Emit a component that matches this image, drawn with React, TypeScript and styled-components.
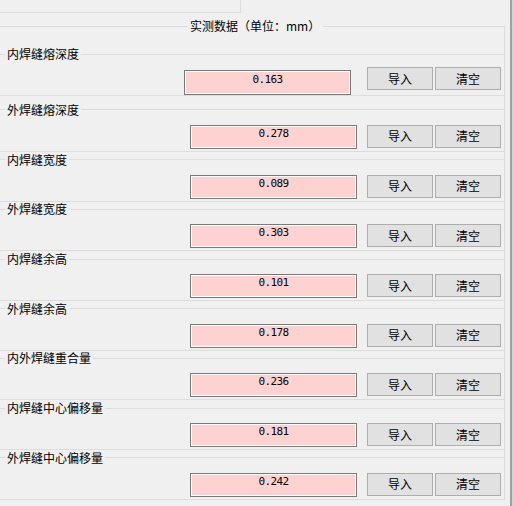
import styled, { createGlobalStyle } from 'styled-components';

// ─── Data ─────────────────────────────────────────────────────────────────────

const measurements = [
  { label: '内焊缝熔深度', value: '0.163' },
  { label: '外焊缝熔深度', value: '0.278' },
  { label: '内焊缝宽度', value: '0.089' },
  { label: '外焊缝宽度', value: '0.303' },
  { label: '内焊缝余高', value: '0.101' },
  { label: '外焊缝余高', value: '0.178' },
  { label: '内外焊缝重合量', value: '0.236' },
  { label: '内焊缝中心偏移量', value: '0.181' },
  { label: '外焊缝中心偏移量', value: '0.242' },
];

// ─── Styled components ────────────────────────────────────────────────────────

const GlobalStyle = createGlobalStyle`
  html, body {
    margin: 0;
    padding: 0;
    background: #f0f0f0;
  }
  body {
    font-family: "Noto Sans CJK SC", "Noto Sans", sans-serif;
    color: #000;
  }
`;

const Window = styled.div`
  width: 513px;
  height: 506px;
  display: flex;
  overflow: hidden;
  background: #f0f0f0;
`;

const Main = styled.div`
  flex: 1;
  min-width: 0;
  display: flex;
  flex-direction: column;
  padding-right: 5px;
`;

// window frame edge on the right
const Edge = styled.div`
  width: 3px;
  flex-shrink: 0;
  background: linear-gradient(to right, #a0a0a0 0 2px, #d4d4d4 2px);
`;

const TopPanel = styled.div`
  width: 240px;
  height: 12px;
  flex-shrink: 0;
  border-right: 1px solid #dcdcdc;
  border-bottom: 1px solid #dcdcdc;
`;

const DataGroup = styled.fieldset`
  margin: 6px 0 0;
  padding: 14px 0 0;
  min-width: 0;
  border: none;
  border-top: 1px solid #dcdcdc;
  border-right: 1px solid #dcdcdc;
  display: flex;
  flex-direction: column;
  gap: 0.7px;
`;

const GroupTitle = styled.legend`
  margin-left: 187px;
  padding: 0 3px;
  font-size: 12px;
  line-height: 14px;
`;

const MeasureGroup = styled.fieldset<{ $lead?: boolean }>`
  margin: 0 0 ${({ $lead }) => ($lead ? '6.3px' : '0')};
  padding: ${({ $lead }) => ($lead ? '6px 3px 0 0' : '8px 3px 2px 0')};
  min-width: 0;
  border: none;
  border-top: 1px solid #dcdcdc;
  border-bottom: 1px solid #dcdcdc;
`;

const MeasureLabel = styled.legend`
  margin-left: 5px;
  padding: 0 2px;
  font-size: 12px;
  line-height: 14px;
`;

const ValueRow = styled.div`
  display: flex;
  justify-content: flex-end;
  align-items: flex-start;
`;

const ValueBox = styled.input<{ $lead?: boolean }>`
  box-sizing: border-box;
  width: 167px;
  height: ${({ $lead }) => ($lead ? '25px' : '24px')};
  margin: ${({ $lead }) => ($lead ? '3px 16px 0 0' : '0 10px 0 0')};
  padding: 0 0 7px;
  border: 1px solid #7a7a7a;
  box-shadow: inset 0 0 0 1px #fff;
  background: #ffd2d2;
  color: #000;
  text-align: center;
  font-family: "DejaVu Sans Mono", monospace;
  font-size: 11px;
  letter-spacing: -0.6px;
  outline: none;
`;

const ButtonPair = styled.div`
  display: flex;
  gap: 2px;
`;

const ActionButton = styled.button`
  box-sizing: border-box;
  width: 66px;
  height: 23px;
  margin: 0;
  padding: 0;
  background: #e1e1e1;
  border: 1px solid #adadad;
  color: #000;
  font-family: "Noto Sans CJK SC", sans-serif;
  font-size: 12px;
  line-height: 1;
`;

// ─── Component ────────────────────────────────────────────────────────────────

export default function App() {
  return (
    <Window>
      <GlobalStyle />
      <Main>
        <TopPanel />
        <DataGroup>
          <GroupTitle>实测数据（单位：mm）</GroupTitle>
          {measurements.map((m, i) => (
            <MeasureGroup key={m.label} $lead={i === 0}>
              <MeasureLabel>{m.label}</MeasureLabel>
              <ValueRow>
                <ValueBox $lead={i === 0} readOnly value={m.value} />
                <ButtonPair>
                  <ActionButton>导入</ActionButton>
                  <ActionButton>清空</ActionButton>
                </ButtonPair>
              </ValueRow>
            </MeasureGroup>
          ))}
        </DataGroup>
      </Main>
      <Edge />
    </Window>
  );
}
